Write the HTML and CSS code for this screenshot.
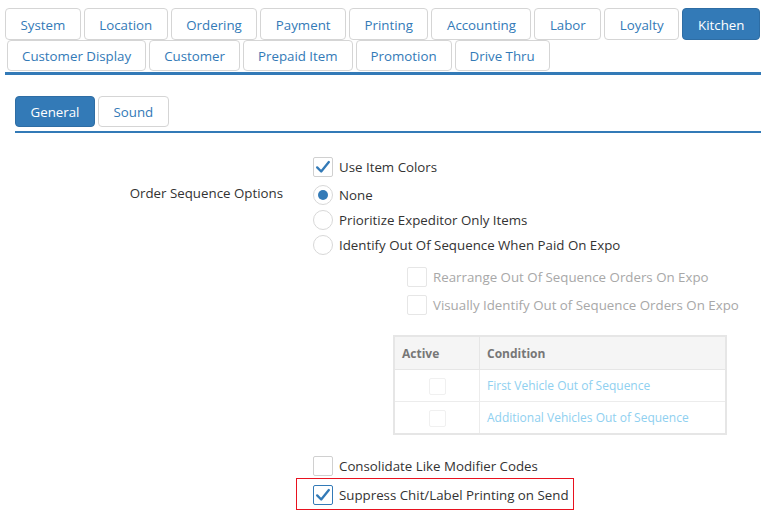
FILE: index.html
```html
<!DOCTYPE html>
<html lang="en">
<head>
    <meta charset="UTF-8">
    <meta name="viewport" content="width=device-width, initial-scale=1.0">
    <title>Settings - Kitchen</title>
    <link rel="stylesheet" href="styles.css">
</head>
<body>

<div class="settings">
    <!-- Main settings tabs -->
    <div class="tabs">
        <div class="tab-row">
            <a class="tab">System</a>
            <a class="tab">Location</a>
            <a class="tab">Ordering</a>
            <a class="tab">Payment</a>
            <a class="tab">Printing</a>
            <a class="tab">Accounting</a>
            <a class="tab">Labor</a>
            <a class="tab">Loyalty</a>
            <a class="tab active">Kitchen</a>
            <a class="tab"></a>
        </div>
        <div class="tab-row second">
            <a class="tab">Customer Display</a>
            <a class="tab">Customer</a>
            <a class="tab">Prepaid Item</a>
            <a class="tab">Promotion</a>
            <a class="tab">Drive Thru</a>
        </div>
    </div>

    <div class="panel">
        <div class="subtabs">
            <a class="tab active">General</a>
            <a class="tab">Sound</a>
        </div>

        <div class="form">
            <div class="form-row first">
                <div class="form-label"></div>
                <div class="controls">
                    <label class="option">
                        <span class="check checked">
                            <svg viewBox="0 0 20 20"><path d="M3.5 10.5 L8 15 L16.5 4.5"/></svg>
                        </span>
                        Use Item Colors
                    </label>
                </div>
            </div>

            <div class="form-row">
                <div class="form-label">Order Sequence Options</div>
                <div class="controls">
                    <label class="option"><span class="radio selected"></span>None</label>
                    <label class="option"><span class="radio"></span>Prioritize Expeditor Only Items</label>
                    <label class="option"><span class="radio"></span>Identify Out Of Sequence When Paid On Expo</label>

                    <div class="sub-options">
                        <label class="option disabled"><span class="check"></span>Rearrange Out Of Sequence Orders On Expo</label>
                        <label class="option disabled"><span class="check"></span>Visually Identify Out of Sequence Orders On Expo</label>
                    </div>

                    <table class="conditions">
                        <thead>
                            <tr><th class="col-active">Active</th><th>Condition</th></tr>
                        </thead>
                        <tbody>
                            <tr><td class="col-active"><span class="mini-check"></span></td><td>First Vehicle Out of Sequence</td></tr>
                            <tr><td class="col-active"><span class="mini-check"></span></td><td>Additional Vehicles Out of Sequence</td></tr>
                        </tbody>
                    </table>

                    <label class="option consolidate"><span class="check"></span>Consolidate Like Modifier Codes</label>
                    <div class="highlight">
                        <label class="option">
                            <span class="check checked focus">
                                <svg viewBox="0 0 20 20"><path d="M3.5 10.5 L8 15 L16.5 4.5"/></svg>
                            </span>
                            Suppress Chit/Label Printing on Send
                        </label>
                    </div>
                </div>
            </div>
        </div>
    </div>
</div>

</body>
</html>
```

FILE: styles.css
```css
body {
    font-family: "Open Sans", Arial, sans-serif;
    font-size: 13.3px;
    color: #333;
    background-color: #fff;
    margin: 0;
    padding: 8px 0 0 5px;
    overflow: hidden;
}
.settings {
    width: 756px;
}
.tabs {
    border-bottom: 3px solid #337ab7;
    padding-bottom: 1px;
}
.tab-row {
    display: flex;
    gap: 3px;
    white-space: nowrap;
    overflow: hidden;
}
.tab-row.second {
    padding-left: 2px;
}
.tab {
    display: inline-flex;
    align-items: center;
    justify-content: center;
    box-sizing: border-box;
    height: 32px;
    padding: 1px 14.5px 0;
    border: 1px solid #d5d5d5;
    border-radius: 4px;
    color: #337ab7;
    background-color: #fff;
    flex-shrink: 0;
}
.tab:empty {
    width: 40px;
}
.tab-row.second .tab {
    height: 31px;
    padding: 1px 14px 0;
}
.tab.active {
    background-color: #337ab7;
    border-color: #2e6da4;
    color: #fff;
}
.tab-row .tab.active {
    padding: 1px 15px 0;
}
.panel {
    padding: 21px 0 0 10px;
}
.subtabs {
    display: flex;
    gap: 3px;
    border-bottom: 2px solid #337ab7;
    padding-bottom: 4px;
}
.subtabs .tab {
    height: 31px;
}
.form {
    padding-top: 24px;
}
.form-row {
    display: grid;
    grid-template-columns: 283px 1fr;
}
.form-label {
    text-align: right;
    padding-right: 15px;
    margin-top: -1px;
    color: #333;
}
.controls {
    padding-left: 15px;
    display: flex;
    flex-direction: column;
    align-items: flex-start;
}
.option {
    display: flex;
    align-items: center;
    gap: 6px;
    height: 20px;
    margin-bottom: 5px;
    color: #333;
    white-space: nowrap;
}
.form-row.first .option {
    margin-bottom: 8px;
}
.check {
    width: 20px;
    height: 20px;
    box-sizing: border-box;
    border: 1px solid #d0d0d0;
    border-radius: 2px;
    background-color: #fff;
    flex-shrink: 0;
}
.check svg {
    display: block;
    width: 18px;
    height: 18px;
}
.check svg path {
    fill: none;
    stroke: #337ab7;
    stroke-width: 2.6;
    stroke-linecap: round;
    stroke-linejoin: round;
}
.check.focus {
    border-color: #337ab7;
}
.radio {
    width: 20px;
    height: 20px;
    box-sizing: border-box;
    border: 1px solid #d8d8d8;
    border-radius: 50%;
    background-color: #fff;
    position: relative;
    flex-shrink: 0;
}
.radio.selected::after {
    content: "";
    position: absolute;
    left: 4px;
    top: 4px;
    width: 10px;
    height: 10px;
    border-radius: 50%;
    background-color: #337ab7;
}
.sub-options {
    padding-left: 94px;
    padding-top: 7px;
}
.sub-options .option {
    margin-bottom: 8px;
}
.option.disabled {
    color: #a8a8a8;
}
.option.disabled .check {
    border-color: #e6e6e6;
}
.conditions {
    margin: 12px 0 0 80px;
    width: 334px;
    border-collapse: collapse;
    border: 2px solid #e6e6e6;
    font-size: 12px;
}
.conditions th {
    background-color: #f5f5f5;
    color: #777;
    font-weight: bold;
    text-align: left;
    height: 32px;
    padding: 0 7px;
    border: 1px solid #e6e6e6;
}
.conditions td {
    height: 31px;
    padding: 0 7px;
    border: 1px solid #ececec;
    color: #8fd0f0;
}
.conditions .col-active {
    width: 70px;
}
.conditions td.col-active {
    text-align: center;
}
.mini-check {
    display: inline-block;
    width: 15px;
    height: 15px;
    border: 1px solid #f0f0f0;
    border-radius: 2px;
    vertical-align: middle;
}
.option.consolidate {
    margin-top: 21px;
    margin-bottom: 0;
}
.highlight {
    margin: 2px 0 0 -17px;
    padding: 6px 4px 4px 16px;
    border: 1px solid #e8121f;
}
.highlight .option {
    margin-bottom: 0;
}
```
